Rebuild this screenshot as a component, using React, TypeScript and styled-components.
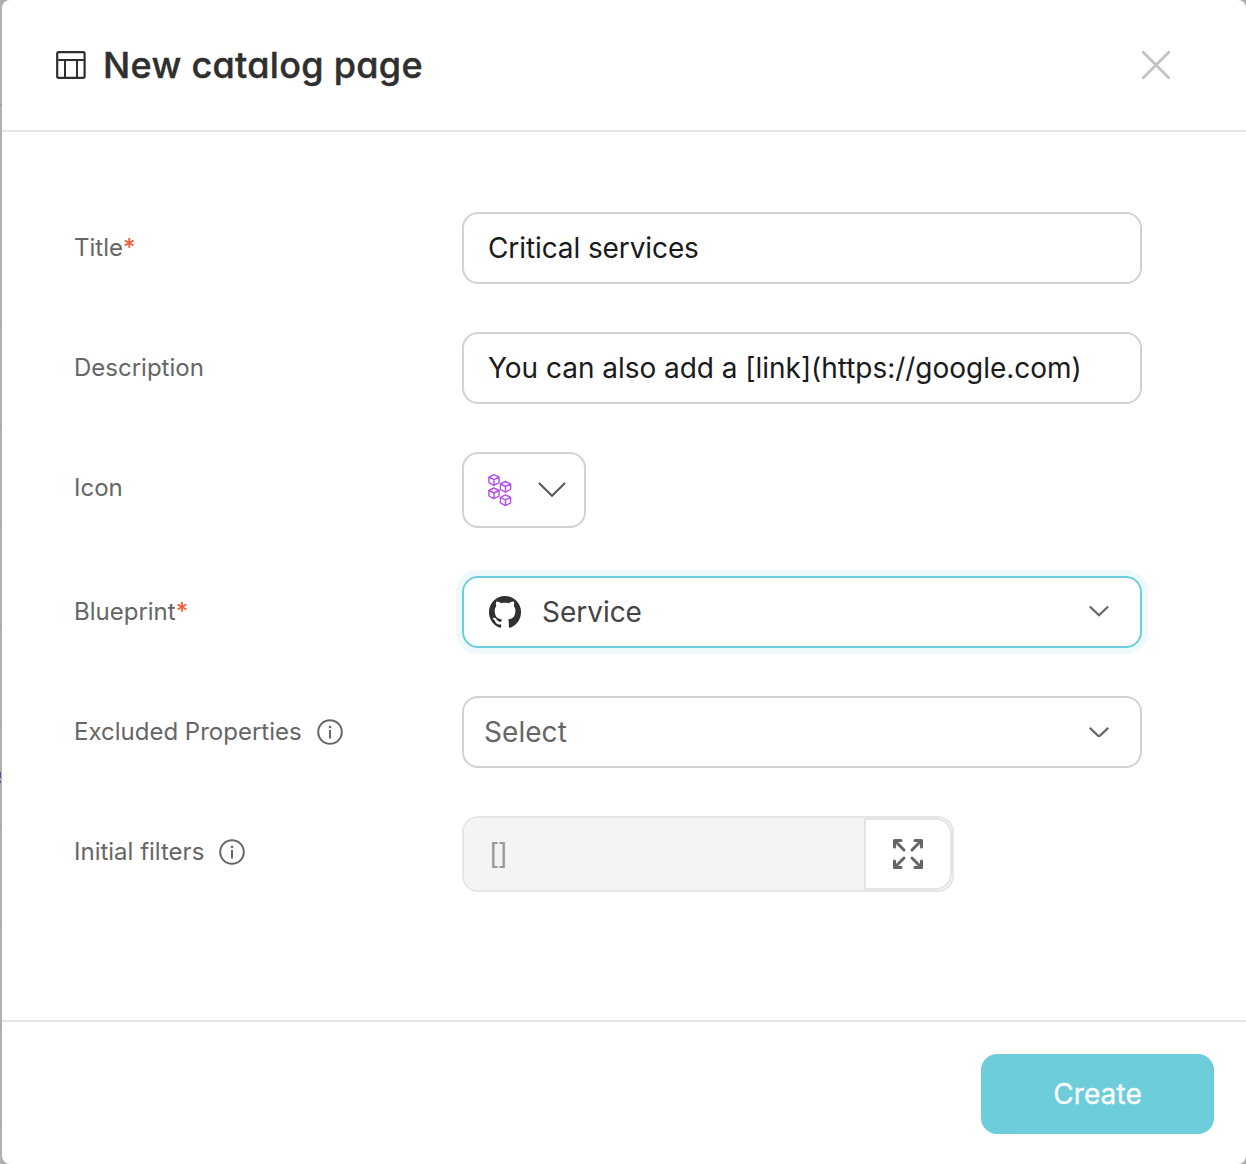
import React from "react";
import styled, { createGlobalStyle } from "styled-components";

const GlobalStyle = createGlobalStyle`
  *, *::before, *::after { box-sizing: border-box; }
  body {
    margin: 0;
    background: #adadad;
    font-family: Inter, "Open Sans", sans-serif;
  }
`;

const Screen = styled.div`
  display: grid;
  grid-template-columns: 2px 1fr;
  height: 1164px;
  overflow: hidden;
`;

const Backdrop = styled.div`
  background:
    linear-gradient(#3f5fae, #3f5fae) 0 772px / 1px 6px no-repeat,
    linear-gradient(#3f5fae, #3f5fae) 0 781px / 1px 2px no-repeat,
    linear-gradient(#a0a0a0, #a0a0a0) 0 104px / 2px 2px no-repeat,
    repeating-linear-gradient(transparent 0 98px, #a7a7a7 98px 100px) 0 226px / 2px 100% no-repeat,
    #b0b0b0;
`;

const Modal = styled.section`
  display: flex;
  flex-direction: column;
  background: #fff;
  border-radius: 8px;
`;

const Header = styled.header`
  display: flex;
  align-items: center;
  height: 132px;
  padding: 0 76px 0 54px;
  border-bottom: 2px solid #e5e5ea;
`;

const Heading = styled.h1`
  flex: 1;
  margin: 0 0 0 17px;
  color: #2f2f2f;
  font-size: 36px;
  line-height: 46px;
  font-weight: 500;
  letter-spacing: 0.3px;
  font-feature-settings: "cv11";
  -webkit-text-stroke: 0.4px #2f2f2f;
`;

const IconButton = styled.button`
  display: flex;
  padding: 0;
  border: 0;
  background: none;
`;

const Form = styled.form`
  display: flex;
  flex: 1;
  flex-direction: column;
  gap: 48px;
  padding: 80px 104px 0 72px;
`;

const Row = styled.div`
  display: grid;
  grid-template-columns: 388px 1fr;
  align-items: start;
`;

const Label = styled.label`
  display: flex;
  align-items: center;
  height: 72px;
  color: #666;
  font-size: 24px;
  letter-spacing: 0;

  svg { margin-left: 15px; }
`;

const LabelText = styled.span`
  padding-bottom: 2px;
`;

const Required = styled.span`
  color: #f0603a;
  font-weight: 500;
`;

const Field = styled.div<{ $focused?: boolean; $tone?: string; $inset?: number }>`
  display: flex;
  align-items: center;
  height: 72px;
  padding: 0 31px 0 ${(p) => p.$inset ?? 24}px;
  border: 2px solid ${(p) => (p.$focused ? "#6dcddb" : "#d2d2d2")};
  border-radius: 16px;
  box-shadow: ${(p) => (p.$focused ? "0 0 0 6px #edf9fb" : "none")};
  color: ${(p) => p.$tone ?? "#1a1a1a"};
  font-size: 28px;
`;

const Value = styled.span<{ $spacing?: number; $indent?: number }>`
  flex: 1;
  margin-left: ${(p) => p.$indent ?? 0}px;
  letter-spacing: ${(p) => p.$spacing ?? -0.03}px;
  white-space: nowrap;
`;

const IconPicker = styled.button`
  display: flex;
  align-items: center;
  gap: 26px;
  width: 124px;
  height: 76px;
  padding: 0 0 0 24px;
  border: 2px solid #d2d2d2;
  border-radius: 16px;
  background: #fff;
`;

const FilterBox = styled.div`
  display: flex;
  width: 492px;
  height: 76px;
  border: 2px solid #e5e5ea;
  border-radius: 16px;
  background: #fff;
`;

const FilterValue = styled.div`
  display: flex;
  flex: 1;
  align-items: center;
  padding-left: 25px;
  border-radius: 14px 0 0 14px;
  background: #f4f4f4;
  color: #999;
  font-size: 28px;
  letter-spacing: -1.5px;
`;

const ExpandButton = styled.button`
  display: flex;
  align-items: center;
  justify-content: center;
  width: 88px;
  height: 72px;
  padding: 0;
  border: 2px solid #e4e4e4;
  border-radius: 0 16px 16px 0;
  background: #fff;
`;

const Footer = styled.footer`
  display: flex;
  justify-content: flex-end;
  height: 144px;
  padding: 32px 32px 0;
  border-top: 2px solid #e4e4e4;
`;

const CreateButton = styled.button`
  width: 233px;
  height: 80px;
  padding: 0;
  border: 0;
  border-radius: 16px;
  background: #6dcddb;
  color: #fff;
  font-family: inherit;
  font-size: 28px;
  font-weight: 400;
  letter-spacing: 0.1px;
  -webkit-text-stroke: 0.3px #fff;
`;

const TableIcon = () => (
  <svg width="30" height="28" viewBox="0 0 30 28" fill="none" stroke="#2f2f2f" strokeWidth="2">
    <rect x="1.2" y="1.2" width="27.4" height="25.6" rx="1.5" strokeWidth="2.2" />
    <path d="M1 9H29M9 9V27M21 9V27" />
  </svg>
);

const CloseIcon = () => (
  <svg width="28" height="28" viewBox="0 0 28 28" stroke="#c2c2c2" strokeWidth="2.8" strokeLinecap="round">
    <path d="M1 1L27 27M27 1L1 27" />
  </svg>
);

const InfoIcon = () => (
  <svg width="26" height="26" viewBox="0 0 26 26" fill="none" stroke="#666" strokeWidth="2">
    <circle cx="13" cy="13" r="11.8" />
    <path d="M13 11V19.5" />
    <circle cx="13" cy="8" r="1.3" fill="#666" stroke="none" />
  </svg>
);

const cubes = [
  [6, 6],
  [17.5, 12.8],
  [6, 19.3],
  [17.5, 26.2],
];

const CubesIcon = () => (
  <svg width="24" height="32" viewBox="0 0 24 32" fill="none" stroke="#b54df0" strokeWidth="1.4" strokeLinejoin="round">
    {cubes.map(([x, y]) => (
      <path
        key={`${x}-${y}`}
        transform={`translate(${x} ${y})`}
        d="M0 -5.3L5.1 -2.8V2.7L0 5.3L-5.1 2.7V-2.8ZM-5.1 -2.8L0 -.3L5.1 -2.8M0 -.3V5.3"
      />
    ))}
  </svg>
);

const WideChevron = () => (
  <svg width="28" height="18" viewBox="0 0 28 18" fill="none" stroke="#555" strokeWidth="2">
    <path d="M1 2L14 14.8L27 2" />
  </svg>
);

const Chevron = ({ lift = 0 }: { lift?: number }) => (
  <svg width="20" height={10 + lift} viewBox={`0 0 20 ${10 + lift}`} fill="none" stroke="#666" strokeWidth="2.2">
    <path d={lift ? "M.8 .5L10 9.3L19.2 .5" : "M.8 .9L10 9.6L19.2 .9"} />
  </svg>
);

const GithubIcon = () => (
  <svg width="32" height="32" viewBox="0 0 32 32" fill="#303032">
    <path d="M16 0A16 16 0 0 0 0 16.3C0 23.6 4.6 29.6 11 31.7C11.8 31.9 12.2 31.4 12.2 30.8V28.4C8 29 6.8 27 6.2 25.5C5.5 24 4.6 23.3 3.8 22.7C3.3 22 4.2 21.6 5.3 21.8C6.6 22.1 7.3 23 8 24.1C9.2 25.8 10.7 25.9 12.3 25.4C12.5 24.6 12.8 24 13.2 23.6C8.6 23.2 5.7 20.8 5.7 14.8C5.7 12.8 6.2 11.4 7.2 10.2C6.8 9 6.7 7.2 7.3 5.5C9.2 5.4 10.9 6.3 12.3 7.2C14.7 6.6 17.4 6.6 19.8 7.2C21.1 6.3 22.8 5.4 24.8 5.5C25.4 7.2 25.3 9 24.9 10.2C25.9 11.4 26.4 12.8 26.4 14.8C26.4 20.8 23.4 23.2 18.8 23.6C19.5 24.2 19.8 25.2 19.8 26.5V30.8C19.8 31.5 20.3 31.9 21.1 31.7C27.4 29.6 32 23.6 32 16.3A16 16 0 0 0 16 0Z" />
  </svg>
);

const ExpandIcon = () => (
  <svg width="30" height="30" viewBox="0 0 30 30" fill="none" stroke="#666" strokeWidth="3" strokeLinecap="round" strokeLinejoin="round">
    {[0, 90, 180, 270].map((angle) => (
      <path key={angle} transform={`rotate(${angle} 15 15)`} d="M1.5 8V1.5H8M2.3 2.3L11 11" />
    ))}
  </svg>
);

export default function App() {
  return (
    <>
      <GlobalStyle />
      <Screen>
        <Backdrop />
        <Modal>
          <Header>
            <TableIcon />
            <Heading>New catalog page</Heading>
            <IconButton aria-label="Close"><CloseIcon /></IconButton>
          </Header>
          <Form>
            <Row>
              <Label><LabelText>Title<Required>*</Required></LabelText></Label>
              <Field><Value $spacing={-0.1}>Critical services</Value></Field>
            </Row>
            <Row>
              <Label><LabelText>Description</LabelText></Label>
              <Field><Value>You can also add a [link](https://google.com)</Value></Field>
            </Row>
            <Row>
              <Label><LabelText>Icon</LabelText></Label>
              <IconPicker type="button"><CubesIcon /><WideChevron /></IconPicker>
            </Row>
            <Row>
              <Label><LabelText>Blueprint<Required>*</Required></LabelText></Label>
              <Field $focused $tone="#444" $inset={25}>
                <GithubIcon />
                <Value $indent={21}>Service</Value>
                <Chevron lift={2} />
              </Field>
            </Row>
            <Row>
              <Label><LabelText>Excluded Properties</LabelText><InfoIcon /></Label>
              <Field $tone="#666" $inset={20}>
                <Value $spacing={0.05}>Select</Value>
                <Chevron />
              </Field>
            </Row>
            <Row>
              <Label><LabelText>Initial filters</LabelText><InfoIcon /></Label>
              <FilterBox>
                <FilterValue>[]</FilterValue>
                <ExpandButton type="button"><ExpandIcon /></ExpandButton>
              </FilterBox>
            </Row>
          </Form>
          <Footer>
            <CreateButton>Create</CreateButton>
          </Footer>
        </Modal>
      </Screen>
    </>
  );
}
